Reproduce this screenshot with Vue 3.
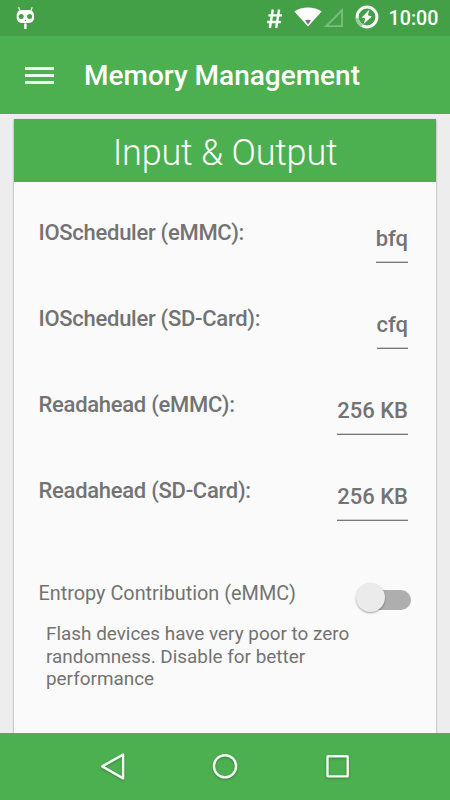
<script setup>
const settings = [
  { label: 'IOScheduler (eMMC):', value: 'bfq' },
  { label: 'IOScheduler (SD-Card):', value: 'cfq' },
  { label: 'Readahead (eMMC):', value: '256 KB' },
  { label: 'Readahead (SD-Card):', value: '256 KB' },
]
</script>

<template>
  <div class="screen">
    <header class="status">
      <svg class="cid" width="20" height="24" viewBox="0 0 20 24">
        <path d="M3.8 4.5L2.6 1.2M15 4.5l1.2-3.3" stroke="#fff" stroke-width="1.2" />
        <rect x="0.7" y="4" width="17.3" height="13" rx="4.8" fill="#fff" />
        <circle cx="5.2" cy="10.4" r="2.5" fill="#43a047" />
        <circle cx="13.6" cy="10.4" r="2.5" fill="#43a047" />
        <circle cx="9.4" cy="14.4" r="0.7" fill="#43a047" />
        <path d="M9.4 17.5v5.5" stroke="#fff" stroke-width="2.4" />
      </svg>
      <span class="spacer"></span>
      <svg class="hash" width="18" height="22" viewBox="0 0 18 22">
        <path d="M6.8 1.5L3.9 20M13.1 1.5L10.2 20M2.4 7.4h13.6M1.2 14h13.6" stroke="#fff" stroke-width="2.4" fill="none" />
      </svg>
      <svg class="wifi" width="28" height="20" viewBox="0 0 28 20">
        <path d="M0.3 4.6C8-1 20-1 27.7 4.6L14 19.6z" fill="#fff" />
        <path d="M11 13.3q3-1.2 6 0L14 17.8z" fill="#777" />
      </svg>
      <svg class="signal" width="20" height="20" viewBox="0 0 20 20">
        <path d="M2.2 18.2H18V2.3z" stroke="#7cbd7f" stroke-width="1.8" fill="none" />
      </svg>
      <svg class="battery" width="24" height="24" viewBox="0 0 24 24">
        <circle cx="12" cy="12" r="9.9" stroke="#fff" stroke-width="3" fill="none" />
        <path d="M2.1 13A9.9 9.9 0 0 0 7 20.6" stroke="#9ccc9e" stroke-width="3.1" fill="none" />
        <path d="M14.4 4.6L6.8 12.4l3.6 1L8.4 19.3l8.4-7.9-3.9-1.1z" fill="#fff" />
      </svg>
      <span class="time">10:00</span>
    </header>

    <div class="toolbar">
      <div class="menu"><i></i><i></i><i></i></div>
      <h1>Memory Management</h1>
    </div>

    <main>
      <section class="card">
        <h2>Input &amp; Output</h2>
        <div class="rows">
          <div v-for="s in settings" :key="s.label" class="row">
            <span class="label">{{ s.label }}</span>
            <span class="value">{{ s.value }}</span>
          </div>
        </div>
        <div class="entropy">
          <span>Entropy Contribution (eMMC)</span>
          <div class="switch"><div class="thumb"></div></div>
        </div>
        <p>Flash devices have very poor to zero randomness. Disable for better performance</p>
      </section>
    </main>

    <nav>
      <svg width="30" height="30" viewBox="0 0 30 30">
        <path d="M25.1 3.6v23.8L4.2 15.4z" />
      </svg>
      <svg width="30" height="30" viewBox="0 0 30 30">
        <circle cx="15" cy="15.3" r="11.1" />
      </svg>
      <svg width="30" height="30" viewBox="0 0 30 30">
        <rect x="4.5" y="5.2" width="20.2" height="20.2" rx="0.5" />
      </svg>
    </nav>
  </div>
</template>

<style>
body {
  margin: 0;
  overflow: hidden;
}
</style>

<style scoped>
.screen {
  width: 450px;
  height: 800px;
  display: flex;
  flex-direction: column;
  overflow: hidden;
  background: #ededed;
  font-family: Roboto, "Liberation Sans", sans-serif;
  color: #737373;
}
.status {
  flex: none;
  height: 36px;
  box-sizing: border-box;
  padding: 0 11.5px 0 16px;
  display: flex;
  align-items: flex-start;
  background: #43a047;
  color: #fff;
}
.cid { margin-top: 6px; }
.spacer { flex: 1; }
.hash { margin: 8px 10.5px 0 0; }
.wifi { margin: 7px 2px 0 0; }
.signal { margin: 8px 11px 0 0; }
.battery { margin: 5px 9.5px 0 0; }
.time {
  font-size: 19.7px;
  font-weight: 500;
  line-height: 24px;
  margin-top: 7px;
}
.toolbar {
  flex: none;
  height: 78px;
  box-sizing: border-box;
  padding-left: 25px;
  display: flex;
  align-items: center;
  background: #4caf50;
  color: #fff;
}
.menu {
  width: 29px;
  display: flex;
  flex-direction: column;
  gap: 4px;
}
.menu i {
  height: 3px;
  background: #edf7ed;
}
h1 {
  margin: 1px 0 0 30px;
  font-size: 28px;
  font-weight: 500;
  line-height: 32px;
  white-space: nowrap;
}
main {
  flex: 1;
  min-height: 0;
  overflow: hidden;
  padding: 5px 14px 0;
}
.card {
  height: 640px;
  background: #fafafa;
  box-shadow: 0 1px 2px rgba(0, 0, 0, 0.42);
}
h2 {
  margin: 0;
  height: 63px;
  line-height: 69px;
  text-align: center;
  background: #4caf50;
  color: #fff;
  font-size: 36px;
  font-weight: 300;
  letter-spacing: -0.2px;
}
.rows { padding: 37px 28px 0 24.5px; }
.row {
  height: 86px;
  display: flex;
  justify-content: space-between;
  align-items: flex-start;
  font-size: 22px;
  font-weight: 500;
  line-height: 27px;
}
.label { letter-spacing: -0.28px; }
.value {
  margin-top: 6px;
  height: 37px;
  border-bottom: 1px solid #777;
  box-shadow: inset 0 -1px #cfcfcf;
}
.entropy {
  height: 30px;
  margin-top: 16px;
  padding: 0 25px 0 24.5px;
  display: flex;
  justify-content: space-between;
  align-items: flex-start;
  font-size: 19.85px;
  line-height: 29px;
}
.switch {
  width: 52px;
  height: 20px;
  margin-top: 11px;
  border-radius: 10px;
  background: #aeaeae;
}
.thumb {
  width: 29px;
  height: 29px;
  margin: -7px 0 0 -3.5px;
  border-radius: 50%;
  background: #ebebeb;
  box-shadow: 0 1px 2px rgba(0, 0, 0, 0.35);
}
p {
  width: 330px;
  margin: 14px 0 0 32px;
  font-size: 18.9px;
  line-height: 22.6px;
}
nav {
  flex: none;
  height: 67px;
  box-sizing: border-box;
  padding: 0 97.5px 2px 97.5px;
  display: flex;
  align-items: center;
  justify-content: space-between;
  background: #4caf50;
}
nav svg {
  fill: none;
  stroke: #f4faf4;
  stroke-width: 2.4;
  stroke-linejoin: round;
  filter: drop-shadow(0 1px 1px rgba(0, 0, 0, 0.25));
}
</style>
